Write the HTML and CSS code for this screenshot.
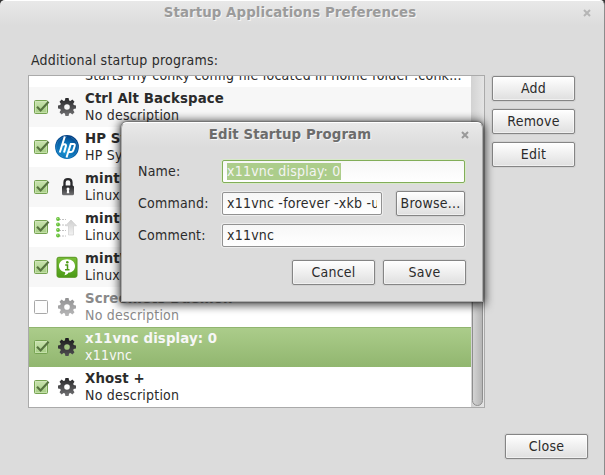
FILE: index.html
```html
<!DOCTYPE html>
<html lang="en">
<head>
<meta charset="utf-8">
<title>Startup Applications Preferences</title>
<link rel="stylesheet" href="styles.css">
</head>
<body>
<svg class="defs" width="0" height="0">
  <defs>
    <linearGradient id="dark" x1="0" y1="0" x2="0" y2="1"><stop offset="0" stop-color="#262628"/><stop offset="1" stop-color="#727274"/></linearGradient>
    <linearGradient id="box" x1="0" y1="0" x2="0" y2="1"><stop offset="0" stop-color="#cae3b0"/><stop offset="1" stop-color="#a5cd83"/></linearGradient>
    <radialGradient id="blue" cx=".45" cy=".65" r=".65"><stop offset="0" stop-color="#20a0dc"/><stop offset=".6" stop-color="#0869b0"/><stop offset="1" stop-color="#043d80"/></radialGradient>
    <linearGradient id="green" x1="0" y1="0" x2="0" y2="1"><stop offset="0" stop-color="#78bd38"/><stop offset="1" stop-color="#4b9b16"/></linearGradient>
    <linearGradient id="arrow" x1="0" y1="0" x2="0" y2="1"><stop offset="0" stop-color="#cfcfcf"/><stop offset="1" stop-color="#f3f3f3"/></linearGradient>
  </defs>
  <symbol id="check" viewBox="0 0 18 18">
    <rect x="1.5" y="2.5" width="13" height="13" rx="1" fill="url(#box)" stroke="#76a352"/>
    <rect x="2.5" y="3.5" width="11" height="11" fill="none" stroke="#d5eabf" stroke-opacity=".6"/>
    <path d="M4 8.7l3.6 3.8L15.6 3.7" fill="none" stroke="#56733f" stroke-width="2.1"/>
  </symbol>
  <symbol id="empty" viewBox="0 0 18 18">
    <rect x="1.5" y="2.5" width="13" height="13" rx="1" fill="#fdfdfd" stroke="#a8a8a8"/>
  </symbol>
  <symbol id="gear" viewBox="0 0 18 18">
    <path fill="url(#dark)" fill-rule="evenodd" d="M7.4 0h3.2l.5 2.400 1.300.5 2-1.300 2.100 2.100-1.300 2 .5 1.300 2.300.5v3l-2.300.5-.5 1.300 1.300 2-2.100 2.100-2-1.300-1.300.5-.5 2.400H7.400l-.5-2.400-1.300-.5-2 1.300-2.100-2.100 1.300-2-.5-1.300L0 10.500v-3L2.300 7l.5-1.300-1.300-2 2.100-2.100 2 1.300 1.300-.5zM9 6.200a2.800 2.800 0 1 0 0 5.600a2.800 2.800 0 1 0 0-5.600z"/>
  </symbol>
</svg>

<main class="window">
  <header class="titlebar"><h1>Startup Applications Preferences</h1>
    <svg class="x" viewBox="0 0 8 8"><path d="M1 1l6 6M7 1L1 7"/></svg></header>
  <p class="caption">Additional startup programs:</p>
  <section class="content">
    <div class="list">
      <ul class="rows">
        <li class="row cut"><span></span><span></span><div class="text"><span>Starts my conky config file located in home folder .conk...</span></div></li>
        <li class="row alt"><svg class="cb"><use href="#check"/></svg><svg class="gear"><use href="#gear"/></svg><div class="text"><b>Ctrl Alt Backspace</b><span>No description</span></div></li>
        <li class="row"><svg class="cb"><use href="#check"/></svg>
          <svg class="icon" viewBox="0 0 24 24"><circle cx="12" cy="12" r="11.900" fill="url(#blue)"/><path d="M12 1.500A10.500 10.500 0 0 0 8 21.700M16 2.300a10.500 10.500 0 0 1-4.500 20.200" fill="none" stroke="#5cb8e8" stroke-opacity=".3"/><path d="M9.800 1.500L4.800 17.500M7 10.200q4-2.300 4 .6L9 17.500M16 8.300L11.500 22.500M15.800 9h2.700q1.800 0 1.100 2.200l-1.300 4.100q-.5 1.700-2.200 1.700h-2.600" fill="none" stroke="#fff" stroke-width="2"/></svg>
          <div class="text"><b>HP System Tray</b><span>HP System Tray Service</span></div></li>
        <li class="row alt"><svg class="cb"><use href="#check"/></svg>
          <svg class="icon" viewBox="0 0 24 24"><path d="M9.500 12V7.500q0-3.300 3.500-3.300t3.500 3.300V12" fill="none" stroke="#29292b" stroke-width="2.300"/><rect x="7" y="10.500" width="12" height="9.800" rx="1.500" fill="url(#dark)"/><circle cx="13" cy="14" r="1.500" fill="#fff"/><path d="M12.300 14h1.400l.6 4.200h-2.600z" fill="#fff"/></svg>
          <div class="text"><b>mintUpload</b><span>Linux Mint Upload</span></div></li>
        <li class="row"><svg class="cb"><use href="#check"/></svg>
          <svg class="icon" viewBox="0 0 24 24"><path d="M4 4.500h7M4 10h7M4 15.500h7M4 21h7" stroke="#c2c2c2" stroke-dasharray="2 1"/><g fill="#63be36"><circle cx="3" cy="4" r="1.900"/><circle cx="3" cy="9.500" r="1.900"/><circle cx="3" cy="15" r="1.900"/><circle cx="3" cy="20.500" r="1.900"/></g><g fill="#b2ed8f"><circle cx="2.700" cy="3.500" r=".7"/><circle cx="2.700" cy="9" r=".7"/><circle cx="2.700" cy="14.500" r=".7"/><circle cx="2.700" cy="20" r=".7"/></g><path d="M16 5l5.500 5.800h-3V20h-5v-9.200h-3z" fill="url(#arrow)" stroke="#c9c9c9" stroke-width=".6"/></svg>
          <div class="text"><b>mintUpdate</b><span>Linux Mint Update</span></div></li>
        <li class="row alt"><svg class="cb"><use href="#check"/></svg>
          <svg class="icon" viewBox="0 0 24 24"><rect x="2" y="2.300" width="20" height="20" rx="1.800" fill="url(#green)" stroke="#57961f"/><path d="M12 4.200c10.500 0 10.500 13.300 1.500 13.300-.8 2-2.700 2.700-4.300 2.700 1-.9 1.200-1.900.9-3C1.500 15.500 2 4.200 12 4.200z" fill="#fff"/><circle cx="12.300" cy="7.300" r="1.300" fill="#4d9918"/><path d="M10.200 9.900h2.300v4.700M10 14.700h4.500" fill="none" stroke="#4d9918" stroke-width="1.500"/></svg>
          <div class="text"><b>mintWelcome</b><span>Linux Mint Welcome</span></div></li>
        <li class="row off"><svg class="cb"><use href="#empty"/></svg><svg class="gear"><use href="#gear"/></svg><div class="text"><b>Screenlets Daemon</b><span>No description</span></div></li>
        <li class="row selected"><svg class="cb"><use href="#check"/></svg><svg class="gear"><use href="#gear"/></svg><div class="text"><b>x11vnc display: 0</b><span>x11vnc</span></div></li>
        <li class="row"><svg class="cb"><use href="#check"/></svg><svg class="gear"><use href="#gear"/></svg><div class="text"><b>Xhost +</b><span>No description</span></div></li>
      </ul>
      <div class="scroll"><div class="thumb"></div></div>
    </div>
    <div class="actions"><button>Add</button><button>Remove</button><button>Edit</button></div>
  </section>
  <footer class="footer"><button>Close</button></footer>
</main>

<section class="dialog">
  <header class="titlebar"><h2>Edit Startup Program</h2>
    <svg class="x" viewBox="0 0 8 8"><path d="M1 1l6 6M7 1L1 7"/></svg></header>
  <div class="form">
    <div class="field"><label>Name:</label><div class="input focus"><mark>x11vnc display: 0</mark></div></div>
    <div class="field"><label>Command:</label><div class="input"><span>x11vnc -forever -xkb -u</span></div><button class="browse">Browse...</button></div>
    <div class="field"><label>Comment:</label><div class="input"><span>x11vnc</span></div></div>
  </div>
  <footer class="buttons"><button>Cancel</button><button>Save</button></footer>
</section>
</body>
</html>
```
FILE: styles.css
```css
* { box-sizing: border-box; }
body {
  margin: 0;
  width: 605px;
  height: 475px;
  overflow: hidden;
  position: relative;
  background: #333;
  font: 14px/17px "DejaVu Sans Condensed", "DejaVu Sans", sans-serif;
  font-stretch: condensed;
  letter-spacing: .22px;
  color: #2b2b2b;
}
h1, h2, p, ul { margin: 0; padding: 0; }
.defs { position: absolute; }
.window {
  height: 475px;
  display: flex;
  flex-direction: column;
  background: linear-gradient(#e8e8e8, #dcdcdc 24px);
  border-top: 1px solid #fff;
  border-right: 1px solid #8c8c8c;
  border-radius: 5px 5px 0 0;
}
.titlebar {
  display: flex;
  align-items: center;
  justify-content: center;
  height: 24px;
  position: relative;
  text-shadow: 1px 1px 0 #f5f5f5;
}
h1, h2, b { font: bold 13.33px/17px "DejaVu Sans", sans-serif; font-stretch: normal; letter-spacing: .1px; }
h1 { color: #9b9b9b; margin: -1px 24px 0 0; }
.x { width: 8px; height: 8px; position: absolute; right: 13px; top: 8px; fill: none; stroke: #b5b5b5; stroke-width: 2; }
.caption { margin: 27px 0 0 31px; height: 23px; }
.content { display: flex; gap: 7px; padding-left: 28px; height: 333px; }
.list { width: 457px; height: 333px; display: flex; border: 1px solid #aaa; background: #fff; }
.rows { width: 442px; height: 331px; display: flex; flex-direction: column; justify-content: flex-end; overflow: hidden; list-style: none; }
.row { flex: 0 0 40px; display: grid; grid-template-columns: 26px 24px 1fr; align-items: center; }
.cut { align-items: end; padding-bottom: 2px; }
.alt { background: #f7f7f7; }
.text { display: flex; flex-direction: column; white-space: nowrap; margin-left: 6px; padding-bottom: 1px; }
.cb { width: 18px; height: 18px; margin-left: 4px; }
.gear { width: 18px; height: 18px; justify-self: center; }
.icon { width: 24px; height: 24px; }
.off { color: #8a8a8a; }
.off .gear { opacity: .5; }
.selected { background: linear-gradient(#accd8b, #91b66f); box-shadow: inset 0 1px #91b56f; color: #f7f7f7; }
.selected .gear { filter: brightness(.7); }
.scroll { width: 13px; background: linear-gradient(90deg, #d2d2d2, #e5e5e5); padding: 80px 1px 1px; }
.thumb { height: 100%; border: 1px solid #8e8e8e; border-radius: 6px; background: linear-gradient(90deg, #d3d3d3, #b5b5b5); }
button {
  width: 83px;
  height: 25px;
  padding: 0 0 1px;
  border: 1px solid #858585;
  border-radius: 2px;
  background: linear-gradient(#fff, #dfdfdf);
  box-shadow: 0 0 0 1px #d1d1d1, inset 0 0 0 1px rgba(255,255,255,.5);
  font: inherit;
  font-stretch: inherit;
  letter-spacing: inherit;
  color: inherit;
}
.actions { display: flex; flex-direction: column; gap: 8px; padding-top: 1px; }
.footer { display: flex; justify-content: flex-end; padding: 26px 16px 0 0; }
.dialog {
  position: absolute;
  left: 121px;
  top: 122px;
  width: 362px;
  height: 180px;
  border: 1px solid #aaa;
  border-top-color: #fff;
  border-radius: 6px 6px 0 0;
  background: linear-gradient(#e9e9e9, #dcdcdc 24px);
  box-shadow: 0 0 2px #222, 0 1px 10px 2px rgba(0,0,0,.75);
}
.dialog .titlebar { height: 23px; }
h2 { color: #6c6c6c; margin-right: 24px; }
.dialog .x { stroke: #999; right: 13px; }
.form { display: flex; flex-direction: column; gap: 7px; padding: 13px 17px 0 16px; }
.field { display: flex; align-items: center; height: 25px; }
label { flex: 0 0 84px; }
.input {
  flex: 1;
  height: 23px;
  overflow: hidden;
  white-space: nowrap;
  padding: 2px 4px;
  border: 1px solid #929292;
  border-radius: 2px;
  background: linear-gradient(#f7f7f7, #fff);
  box-shadow: 0 0 0 1px #ededed;
}
.input span { display: block; overflow: hidden; }
.focus { border-color: #82ad59; box-shadow: 0 0 0 1px #d8e9c9; }
mark { display: inline-block; height: 17px; background: #accd8b; color: #f4f4f4; }
.browse { width: 69px; margin-left: 14px; }
.buttons { display: flex; justify-content: flex-end; gap: 8px; padding: 12px 16px 0 0; }
```
